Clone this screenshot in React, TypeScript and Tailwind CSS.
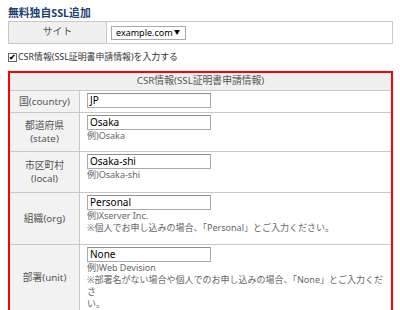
import React from "react";

const font = { fontFamily: '"Noto Sans", "Noto Sans CJK JP", sans-serif' };

function Input({ value }: { value: string }) {
  return (
    <div className="w-[124px] h-[15px] border border-[#a9a9a9] border-t-[#8f8f8f] bg-white pl-[2px] text-[10px] leading-[13px] text-black">
      {value}
    </div>
  );
}

function Row({
  label,
  children,
  h,
}: {
  label: React.ReactNode;
  children: React.ReactNode;
  h: string;
}) {
  return (
    <div className={`flex border-t border-[#c8c8c8] ${h}`}>
      <div className="w-[70px] shrink-0 bg-[#f2f2f2] border-r border-[#c8c8c8] flex items-center justify-center text-center text-[9.8px] leading-[13px] text-[#555]">
        {label}
      </div>
      <div className="flex-1 min-w-0 pl-[7px] pr-[1px] pt-[2px] text-[9px] leading-[12px] text-[#666]">
        {children}
      </div>
    </div>
  );
}

export default function App() {
  return (
    <div className="w-[400px] h-[310px] bg-white overflow-hidden pl-[8px] pr-[7px] pt-[6px]" style={font}>
      <div className="text-[10.8px] leading-[14px] font-bold text-[#1d3f73]">無料独自SSL追加</div>
      <div className="mt-[1px] flex border border-[#c8c8c8] h-[23px]">
        <div className="w-[98px] bg-[#f0f0f0] border-r border-[#c8c8c8] flex items-center justify-center text-[9.8px] text-[#555]">
          サイト
        </div>
        <div className="flex items-center pl-[4px]">
          <div className="h-[14px] w-[75px] border border-[#a9a9a9] flex items-center justify-between pl-[4px] pr-[5px] text-[9px] text-black">
            <span>example.com</span>
            <span className="text-[6px]">▼</span>
          </div>
        </div>
      </div>
      <div className="mt-[7px] flex items-center h-[12px] text-[8.9px] text-[#333]">
        <span className="w-[9px] h-[9px] border border-[#666] bg-white flex items-center justify-center text-[8px] leading-none mr-[1px] text-black font-bold">✔</span>
        CSR情報(SSL証明書申請情報)を入力する
      </div>
      <div className="mt-[8px] border-2 border-[#ff0000]">
        <div className="h-[17px] bg-[#f0f0f0] flex items-center justify-center text-[9.8px] text-[#555]">
          CSR情報(SSL証明書申請情報)
        </div>
        <Row label="国(country)" h="h-[22px]">
          <Input value="JP" />
        </Row>
        <Row
          h="min-h-[39px]"
          label={
            <span>
              都道府県
              <br />
              (state)
            </span>
          }
        >
          <Input value="Osaka" />
          <div>例)Osaka</div>
        </Row>
        <Row
          h="min-h-[41px]"
          label={
            <span>
              市区町村
              <br />
              (local)
            </span>
          }
        >
          <Input value="Osaka-shi" />
          <div>例)Osaka-shi</div>
        </Row>
        <Row label="組織(org)" h="min-h-[52px]">
          <Input value="Personal" />
          <div>例)Xserver Inc.</div>
          <div>※個人でお申し込みの場合、「Personal」とご入力ください。</div>
        </Row>
        <Row label="部署(unit)" h="min-h-[59px]">
          <Input value="None" />
          <div>例)Web Devision</div>
          <div>
            ※部署名がない場合や個人でのお申し込みの場合、「None」とご入力くださ
            <br />
            い。
          </div>
        </Row>
      </div>
    </div>
  );
}
